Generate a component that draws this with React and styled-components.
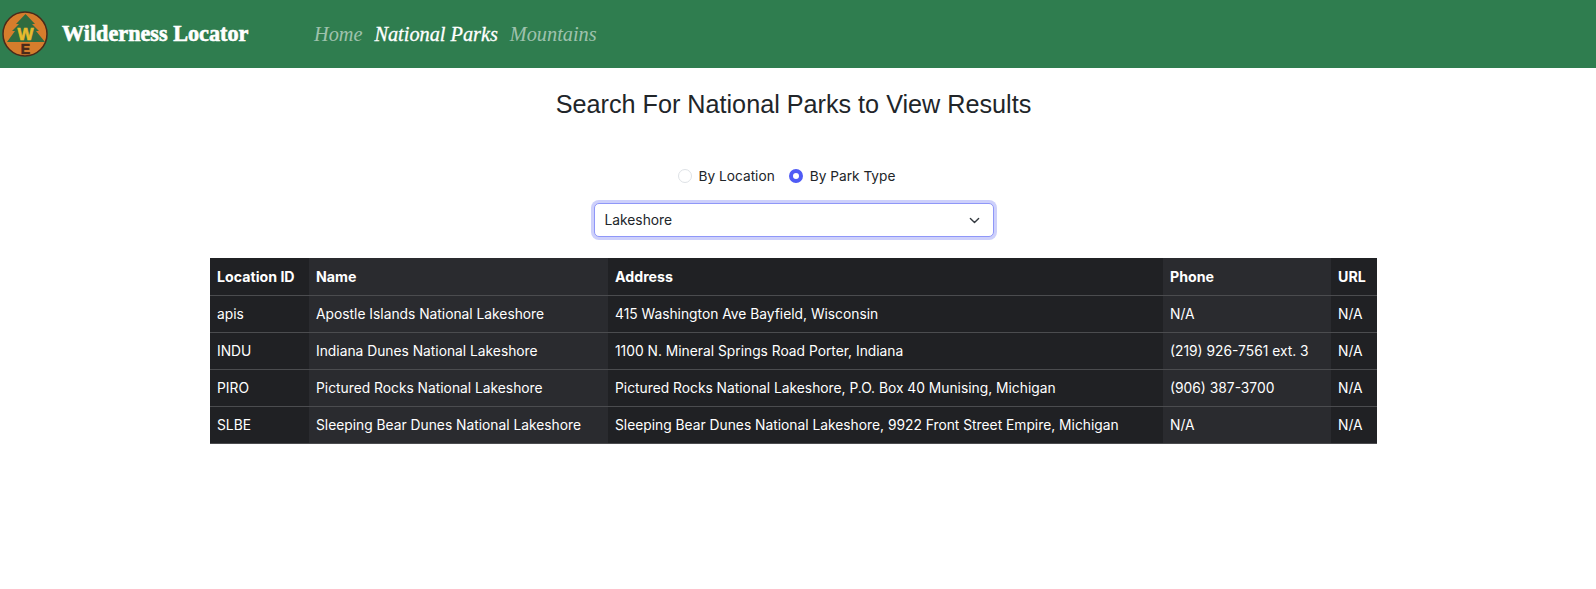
import React from "react";
import styled, { createGlobalStyle } from "styled-components";

const GlobalStyle = createGlobalStyle`
  * { box-sizing: border-box; }
  body {
    margin: 0;
    background: #fff;
    color: #212529;
    font-family: Inter, "Liberation Sans", sans-serif;
  }
`;

const NavBar = styled.nav`
  height: 68px;
  background: #2f7d4f;
  display: flex;
  align-items: center;
  padding-left: 2px;
`;

const Brand = styled.a`
  display: flex;
  align-items: center;
  gap: 14px;
  width: 312px;
  font-family: "Liberation Serif", serif;
  font-weight: 700;
  font-size: 22.2px;
  color: #fff;
  -webkit-text-stroke: 0.6px #fff;
`;

const NavLinks = styled.div`
  display: flex;
  gap: 12px;
`;

const NavLink = styled.a`
  font-family: "Liberation Serif", serif;
  font-style: italic;
  font-size: 20.3px;
  color: ${({ $active }) => ($active ? "#fff" : "rgba(255, 255, 255, 0.55)")};
  -webkit-text-stroke: ${({ $active }) => ($active ? "0.3px #fff" : "0")};
`;

const Main = styled.main`
  display: flex;
  flex-direction: column;
  align-items: center;
  padding-right: 9px;
`;

const Title = styled.h1`
  margin: 22px 0 0;
  font-family: "Liberation Sans", sans-serif;
  font-weight: 400;
  font-size: 25.2px;
  line-height: 29px;
  color: #212529;
`;

const RadioRow = styled.div`
  display: flex;
  gap: 14px;
  margin: 47px 14px 0 0;
  height: 20px;
  font-size: 13.7px;
`;

const RadioLabel = styled.label`
  display: flex;
  align-items: center;
  gap: 7px;
  color: #212529;
`;

const RadioDot = styled.span`
  width: 14px;
  height: 14px;
  border-radius: 50%;
  background: #fff;
  border: ${({ $checked }) =>
    $checked ? "4px solid #4f5bf5" : "1px solid #dee2e6"};
`;

const SelectBox = styled.div`
  width: 400px;
  height: 34px;
  margin-top: 17px;
  padding: 0 13px 0 10px;
  display: flex;
  align-items: center;
  justify-content: space-between;
  background: #fff;
  border: 1px solid #8f97f8;
  border-radius: 5px;
  box-shadow: 0 0 0 3px #cdd0fb;
  font-size: 13.8px;
  color: #212529;
`;

const DataTable = styled.table`
  width: 1167px;
  margin-top: 21px;
  border-collapse: collapse;
  table-layout: fixed;
  font-size: 13.8px;
  color: #fff;
  background: #202124;
`;

const Cell = styled.td`
  height: 37px;
  padding: 0 7px;
  white-space: nowrap;
  text-align: left;
  font-size: ${({ $head }) => ($head ? "14.2px" : "inherit")};
  font-weight: ${({ $head }) => ($head ? 700 : 400)};
  background: ${({ $alt }) => ($alt ? "#2a2b2f" : "#202124")};
`;

const Row = styled.tr`
  border-bottom: 1px solid #4b4c4f;
`;

const Col = styled.col`
  width: ${({ $w }) => $w}px;
`;

const columnWidths = [99, 299, 555, 168, 46];
const headers = ["Location ID", "Name", "Address", "Phone", "URL"];
const rows = [
  ["apis", "Apostle Islands National Lakeshore", "415 Washington Ave Bayfield, Wisconsin", "N/A", "N/A"],
  ["INDU", "Indiana Dunes National Lakeshore", "1100 N. Mineral Springs Road Porter, Indiana", "(219) 926-7561 ext. 3", "N/A"],
  ["PIRO", "Pictured Rocks National Lakeshore", "Pictured Rocks National Lakeshore, P.O. Box 40 Munising, Michigan", "(906) 387-3700", "N/A"],
  ["SLBE", "Sleeping Bear Dunes National Lakeshore", "Sleeping Bear Dunes National Lakeshore, 9922 Front Street Empire, Michigan", "N/A", "N/A"],
];

const Logo = () => (
  <svg width="46" height="46" viewBox="0 0 46 46">
    <circle cx="23" cy="23" r="22" fill="#d67d2c" stroke="#4a2a1a" strokeWidth="1.5" />
    <path
      d="M23.5 3 L33 13 L30 13 L37 20 L34 20 L43 31 L5 31 L13 20 L10 20 L17 13 L14 13 Z"
      fill="#2f6b3f"
    />
    <text x="23.5" y="29" textAnchor="middle" fontFamily="Liberation Sans" fontWeight="700" fontSize="17" fill="#e8bb2e" stroke="#e8bb2e" strokeWidth="0.6">
      W
    </text>
    <text x="23.5" y="43" textAnchor="middle" fontFamily="Liberation Sans" fontWeight="700" fontSize="14" fill="#4a2a1a" stroke="#4a2a1a" strokeWidth="0.6">
      E
    </text>
  </svg>
);

const Chevron = () => (
  <svg width="11" height="11" viewBox="0 0 16 16" fill="none" stroke="#343a40" strokeWidth="2" strokeLinecap="round" strokeLinejoin="round">
    <path d="M2 5l6 6 6-6" />
  </svg>
);

const App = () => (
  <>
    <GlobalStyle />
    <NavBar>
      <Brand>
        <Logo />
        Wilderness Locator
      </Brand>
      <NavLinks>
        <NavLink>Home</NavLink>
        <NavLink $active>National Parks</NavLink>
        <NavLink>Mountains</NavLink>
      </NavLinks>
    </NavBar>
    <Main>
      <Title>Search For National Parks to View Results</Title>
      <RadioRow>
        <RadioLabel>
          <RadioDot />
          By Location
        </RadioLabel>
        <RadioLabel>
          <RadioDot $checked />
          By Park Type
        </RadioLabel>
      </RadioRow>
      <SelectBox>
        Lakeshore
        <Chevron />
      </SelectBox>
      <DataTable>
        <colgroup>
          {columnWidths.map((w, i) => (
            <Col key={i} $w={w} />
          ))}
        </colgroup>
        <thead>
          <Row>
            {headers.map((h, i) => (
              <Cell as="th" key={h} $head $alt={i % 2 === 1}>
                {h}
              </Cell>
            ))}
          </Row>
        </thead>
        <tbody>
          {rows.map((row) => (
            <Row key={row[0]}>
              {row.map((value, i) => (
                <Cell key={i} $alt={i % 2 === 1}>
                  {value}
                </Cell>
              ))}
            </Row>
          ))}
        </tbody>
      </DataTable>
    </Main>
  </>
);

export default App;
